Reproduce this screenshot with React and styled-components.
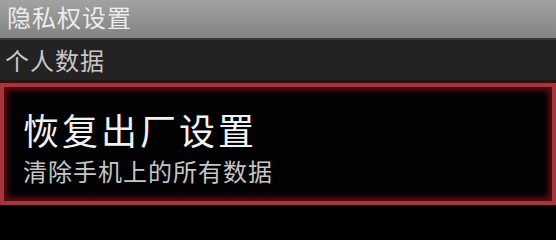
import React from 'react';
import styled, { createGlobalStyle } from 'styled-components';

const GlobalStyle = createGlobalStyle`
  html, body {
    margin: 0;
    padding: 0;
    background: #000000;
  }
  body {
    font-family: "Noto Sans CJK SC", "Noto Sans", sans-serif;
  }
`;

const Screen = styled.div`
  width: 556px;
  height: 205px;
  display: flex;
  flex-direction: column;
  background: #000000;
  overflow: hidden;
`;

const TitleBar = styled.div`
  height: 40px;
  flex-shrink: 0;
  display: flex;
  align-items: center;
  padding: 1px 0 5px 7px;
  background: linear-gradient(to bottom, #a2a2a2 0%, #929292 50%, #838383 100%);
  border-bottom: 2px solid #3a3a3a;
  box-sizing: border-box;
`;

const Title = styled.span`
  font-size: 24px;
  letter-spacing: 1px;
  line-height: 34px;
  color: #ececec;
`;

const SectionHeader = styled.div`
  height: 42px;
  flex-shrink: 0;
  display: flex;
  align-items: center;
  padding-left: 5px;
  background: #232323;
  border-bottom: 2px solid #2a1012;
  box-sizing: border-box;
`;

const SectionLabel = styled.span`
  font-size: 24px;
  letter-spacing: 1px;
  line-height: 30px;
  color: #c8c8c8;
`;

const Item = styled.div`
  flex: 1;
  display: flex;
  flex-direction: column;
  justify-content: flex-start;
  gap: 6px;
  padding: 21px 0 0 19px;
  border: 4px solid #a8343c;
  background: #020203;
  box-shadow: inset 0 0 6px 3px rgba(120, 14, 22, 0.85), 0 0 2px 1px #4a1216;
  margin-top: 1px;
`;

const ItemTitle = styled.div`
  font-size: 36px;
  letter-spacing: 3px;
  line-height: 42px;
  color: #f2f2f2;
`;

const ItemSummary = styled.div`
  font-size: 24px;
  letter-spacing: 1px;
  line-height: 30px;
  color: #c6c6c6;
`;

const App = () => (
  <>
    <GlobalStyle />
    <Screen>
      <TitleBar>
        <Title>隐私权设置</Title>
      </TitleBar>
      <SectionHeader>
        <SectionLabel>个人数据</SectionLabel>
      </SectionHeader>
      <Item>
        <ItemTitle>恢复出厂设置</ItemTitle>
        <ItemSummary>清除手机上的所有数据</ItemSummary>
      </Item>
    </Screen>
  </>
);

export default App;
